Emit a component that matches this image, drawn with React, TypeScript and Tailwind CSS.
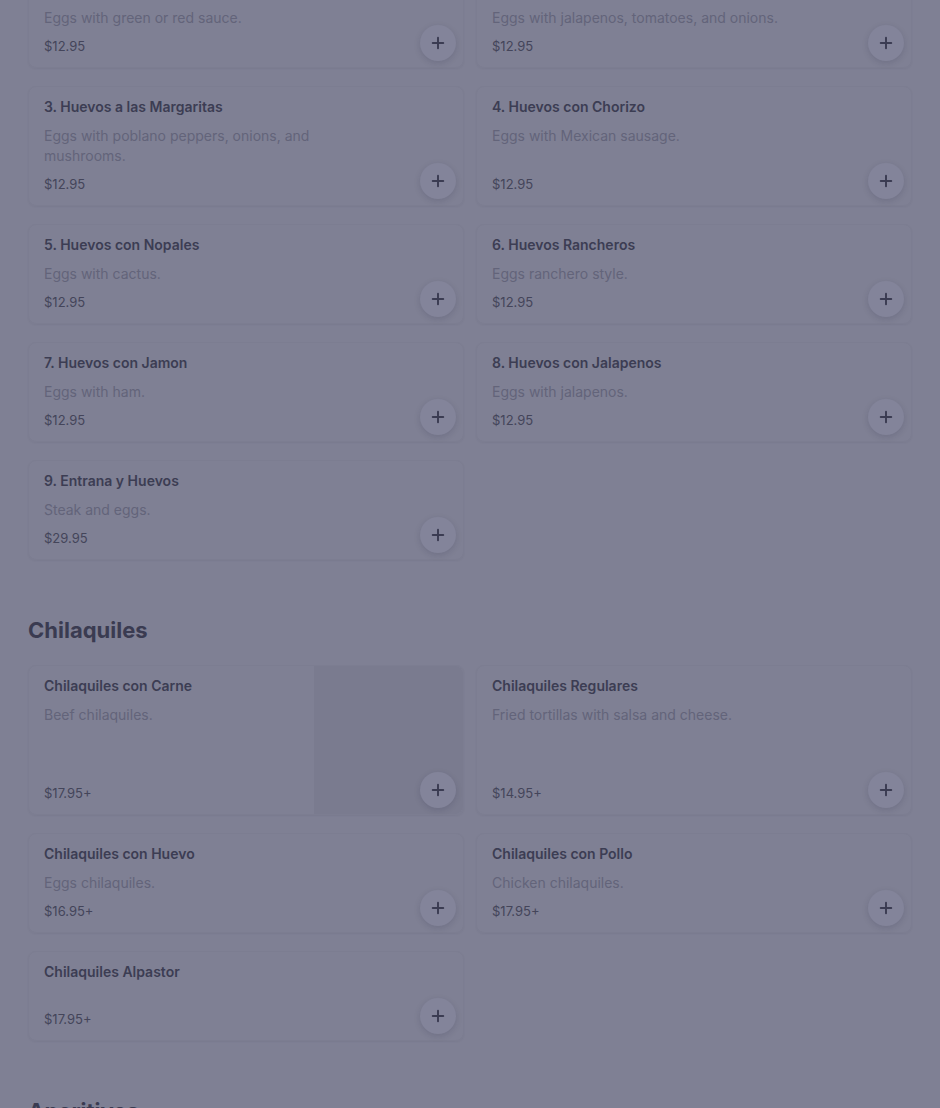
import { Plus } from "lucide-react";

type Item = {
  name: string;
  desc?: string;
  price: string;
  image?: boolean;
};

const huevos: Item[] = [
  { name: "1. Huevos Divorciados", desc: "Eggs with green or red sauce.", price: "$12.95" },
  { name: "2. Huevos a la Mexicana", desc: "Eggs with jalapenos, tomatoes, and onions.", price: "$12.95" },
  { name: "3. Huevos a las Margaritas", desc: "Eggs with poblano peppers, onions, and mushrooms.", price: "$12.95" },
  { name: "4. Huevos con Chorizo", desc: "Eggs with Mexican sausage.", price: "$12.95" },
  { name: "5. Huevos con Nopales", desc: "Eggs with cactus.", price: "$12.95" },
  { name: "6. Huevos Rancheros", desc: "Eggs ranchero style.", price: "$12.95" },
  { name: "7. Huevos con Jamon", desc: "Eggs with ham.", price: "$12.95" },
  { name: "8. Huevos con Jalapenos", desc: "Eggs with jalapenos.", price: "$12.95" },
  { name: "9. Entrana y Huevos", desc: "Steak and eggs.", price: "$29.95" },
];

const chilaquiles: Item[] = [
  { name: "Chilaquiles con Carne", desc: "Beef chilaquiles.", price: "$17.95+", image: true },
  { name: "Chilaquiles Regulares", desc: "Fried tortillas with salsa and cheese.", price: "$14.95+" },
  { name: "Chilaquiles con Huevo", desc: "Eggs chilaquiles.", price: "$16.95+" },
  { name: "Chilaquiles con Pollo", desc: "Chicken chilaquiles.", price: "$17.95+" },
  { name: "Chilaquiles Alpastor", price: "$17.95+" },
];

function MenuCard({ item }: { item: Item }) {
  return (
    <div className="relative flex rounded-lg border border-[#7c7d91] shadow-[0_1px_2px_rgba(40,40,70,0.06)]">
      {/* text */}
      <div className="flex min-h-[88px] flex-1 flex-col pt-[10px] pb-[11px] pl-[15px] pr-3">
        <div className="text-[14px] font-semibold leading-5 text-[#3c3d53]">{item.name}</div>
        {item.desc && (
          <div className="mt-[9px] max-w-[300px] text-[14px] leading-5 text-[#63647a]">
            {item.desc}
          </div>
        )}
        <div className="mt-auto pt-2 text-[13px] leading-5 text-[#44455a]">{item.price}</div>
      </div>

      {/* photo placeholder */}
      {item.image && (
        <div className="h-[148px] w-[149px] shrink-0 rounded-r-lg bg-[#7a7b8f]" />
      )}

      {/* add button */}
      <button className="absolute bottom-[6px] right-[7px] flex h-9 w-9 items-center justify-center rounded-full bg-[#83849a] shadow-[0_2px_6px_rgba(30,30,60,0.16)]">
        <Plus size={18} strokeWidth={2.6} className="text-[#3b3c52]" />
      </button>
    </div>
  );
}

function Section({ title, items, first }: { title?: string; items: Item[]; first?: boolean }) {
  return (
    <section className={first ? "-mt-8" : "mt-[56px]"}>
      {title && (
        <h2 className="mb-[21px] text-[22px] font-bold leading-7 text-[#3a3b51]">{title}</h2>
      )}
      <div className="grid grid-cols-2 gap-x-3 gap-y-[18px]">
        {items.map((it) => (
          <MenuCard key={it.name} item={it} />
        ))}
      </div>
    </section>
  );
}

export default function App() {
  return (
    <div
      className="h-[1108px] overflow-hidden bg-[#7f8094] px-7"
      style={{ fontFamily: "Inter, 'Noto Sans', sans-serif" }}
    >
      <Section items={huevos} first />
      <Section title="Chilaquiles" items={chilaquiles} />
      <Section title="Aperitivos" items={[]} />
    </div>
  );
}
